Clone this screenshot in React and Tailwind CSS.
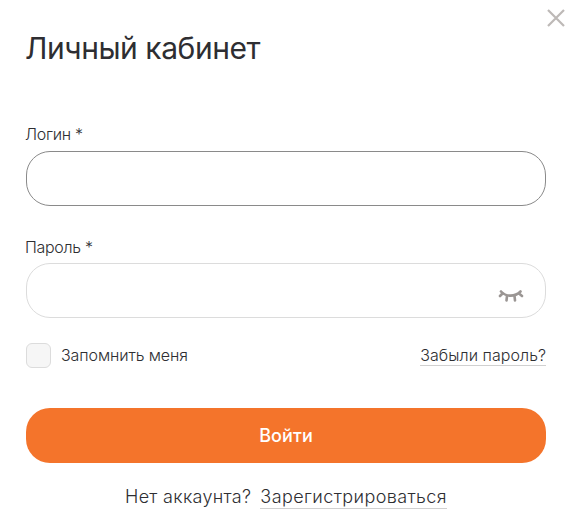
export default function App() {
  return (
    <div className="relative w-[577px] h-[530px] bg-white overflow-hidden px-[26px] pt-[29px] font-['Inter',sans-serif] text-[#2e2e32]">
      <button className="absolute left-[547px] top-[9px] w-[18px] h-[18px]" aria-label="Закрыть">
        <svg width="18" height="18" viewBox="0 0 18 18" fill="none" stroke="#bdb9b7" strokeWidth="2.2">
          <path d="M1 1L17 17M17 1L1 17" />
        </svg>
      </button>
      <h1 className="text-[30px] leading-[38px] font-normal tracking-[-0.45px] -ml-px">Личный кабинет</h1>

      <div className="mt-[57px] w-[520px]">
        <label className="block text-[16px] leading-5 font-light tracking-[-0.3px] -ml-px">Логин *</label>
        <input className="block mt-[7px] w-full h-[55px] rounded-[24px] border border-[#8a8a8a] bg-white" />
      </div>

      <div className="mt-[31px] w-[520px]">
        <label className="block text-[16px] leading-5 font-light tracking-[-0.3px] -ml-px">Пароль *</label>
        <div className="relative mt-[6px]">
          <input className="block w-full h-[55px] rounded-[24px] border border-[#dcdcdc] bg-white" />
          <svg className="absolute left-[472px] top-[25px]" width="26" height="15" viewBox="0 0 26 15" fill="none" stroke="#9b9694" strokeWidth="2.6" strokeLinecap="round">
            <path d="M3 3.5C8 9 17 9 22.5 3.5" />
            <path d="M9 8L8.5 12.5M16.5 8L17 12.5M4.5 5.5L2 8M21 5.5L24 8" />
          </svg>
        </div>
      </div>

      <div className="mt-[25px] w-[520px] flex items-center justify-between">
        <div className="flex items-center gap-[10px]">
          <span className="w-[25px] h-[25px] rounded-[6px] border border-[#dcdcdc] bg-[#f6f6f6]" />
          <span className="text-[16px] leading-5 font-light tracking-[-0.1px] -mt-[2px]">Запомнить меня</span>
        </div>
        <a className="mt-[1px] text-[16px] leading-[18px] font-light tracking-[0.05px] pb-[1px] border-b border-[#d0d0d0]">Забыли пароль?</a>
      </div>

      <button className="mt-[40px] block w-[520px] h-[55px] rounded-[24px] bg-[#f4742b] text-white text-[18px] font-medium tracking-[0.1px]">Войти</button>

      <div className="mt-[23px] w-[520px] flex justify-center gap-[9px] text-[18px] leading-[22px] font-light tracking-[0.3px]">
        <span>Нет аккаунта?</span>
        <a className="border-b border-[#d0d0d0] tracking-[0.4px]">Зарегистрироваться</a>
      </div>
    </div>
  );
}
